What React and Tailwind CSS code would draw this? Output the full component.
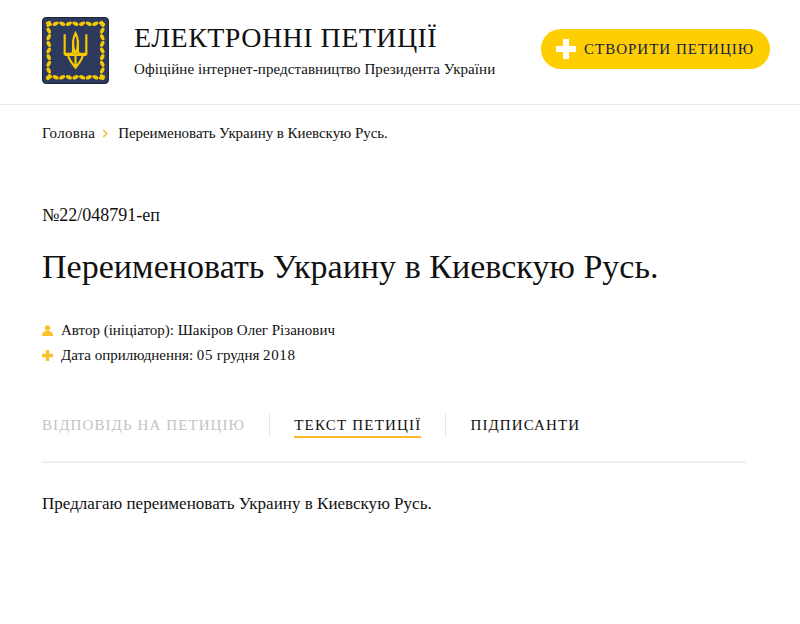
const serif = { fontFamily: '"Liberation Serif", serif' };

const braid = [];
for (let i = 0; i < 9; i++) {
  const p = 2 + i * 6.75;
  braid.push([p, 1.8, i % 2 ? -25 : 25], [p, 56.2, i % 2 ? 25 : -25], [1.8, p, i % 2 ? 65 : 115], [56.2, p, i % 2 ? 115 : 65]);
}

function Logo() {
  return (
    <div className="w-[67px] h-[67px] rounded-[4px] bg-[#2d3a5e] border border-[#1d2536] flex items-center justify-center shrink-0">
      <svg viewBox="-2 -2 62 62" className="w-[61px] h-[61px]">
        {braid.map(([x, y, r], i) => (
          <ellipse key={i} cx={x} cy={y} rx="3.300" ry="1.900" fill="#f5c800" transform={`rotate(${r} ${x} ${y})`} />
        ))}
        <g transform="translate(16.500 10.500)" fill="none" stroke="#f5c800" strokeWidth="2.200">
          <path d="M1.500 2v20h6c1.500 0 2.500-1 2.500-3V8" />
          <path d="M23.500 2v20h-6c-1.500 0-2.500-1-2.500-3V8" />
          <path d="M12.500 1c-2 4-3 8-2.200 13 .4 3 1.200 6 2.200 8 1-2 1.800-5 2.200-8 .8-5-.2-9-2.200-13z" />
          <path d="M1.500 23h22M5 23c.5 5 4 8 7.500 13 3.500-5 7-8 7.500-13M12.500 23v13" />
        </g>
      </svg>
    </div>
  );
}

function Plus({ className }) {
  return (
    <svg viewBox="0 0 20 20" className={className} fill="currentColor">
      <path d="M7 0h6v7h7v6h-7v7H7v-7H0V7h7z" />
    </svg>
  );
}

export default function App() {
  return (
    <div className="bg-white h-[624px] overflow-hidden text-[#111]" style={serif}>
      <header className="h-[105px] border-b border-[#e9e9e9] pl-[42px] pr-[30px] flex items-center">
        <div className="-mt-[3px]"><Logo /></div>
        <div className="ml-[25px] flex-1 -mt-[5px]">
          <div className="text-[28px] leading-[34px] tracking-[0.45px]">ЕЛЕКТРОННІ ПЕТИЦІЇ</div>
          <div className="text-[15px] leading-[18px] mt-[5px] tracking-[0.07px] whitespace-nowrap">Офіційне інтернет-представництво Президента України</div>
        </div>
        <div className="w-[229px] h-[40px] rounded-full bg-[#ffce00] flex items-center pl-[15px] -mt-[6px] text-[#10204a]">
          <Plus className="w-[20px] h-[20px] text-white" />
          <span className="ml-[8px] text-[15px] tracking-[1px] whitespace-nowrap">СТВОРИТИ ПЕТИЦІЮ</span>
        </div>
      </header>

      <main className="pl-[42px] pr-[54px]">
        <nav className="flex items-center h-[20px] mt-[18px] text-[15px]">
          <span className="tracking-[0.25px]">Головна</span>
          <svg viewBox="0 0 8 10" className="w-[7px] h-[9px] ml-[7px] mr-[9px]" fill="none" stroke="#fbb829" strokeWidth="1.600"><path d="M1.500 1l4 4-4 4" /></svg>
          <span className="tracking-[-0.05px]">Переименовать Украину в Киевскую Русь.</span>
        </nav>

        <div className="mt-[62px] text-[18px] leading-[20px]">№22/048791-еп</div>
        <h1 className="mt-[21px] text-[34px] leading-[42px] font-normal tracking-[0.03px]">Переименовать Украину в Киевскую Русь.</h1>

        <div className="mt-[30px] text-[15px] flex flex-col">
          <div className="flex items-center h-[25px]">
            <svg viewBox="0 0 12 12" className="w-[11px] h-[11px]" fill="#fbc02d"><circle cx="6" cy="3.200" r="3" /><path d="M0 12c0-4 2-5.500 6-5.500s6 1.500 6 5.500z" /></svg>
            <span className="ml-[8px]">Автор (ініціатор): Шакіров Олег Різанович</span>
          </div>
          <div className="flex items-center h-[24px]">
            <Plus className="w-[11px] h-[11px] text-[#fbc02d]" />
            <span className="ml-[8px]">Дата оприлюднення: <span className="tracking-[0.6px]">05</span> грудня <span className="tracking-[0.6px]">2018</span></span>
          </div>
        </div>

        <div className="mt-[47px] flex items-center h-[22px] text-[15px] tracking-[1.1px]">
          <span className="text-[#c4c4c4] pr-[24px] border-r border-[#e5e5e5] leading-[22px]">ВІДПОВІДЬ НА ПЕТИЦІЮ</span>
          <div className="mx-[24px]"><span className="block border-b-2 border-[#fbb829] leading-[22px] mt-[2px] tracking-[1.2px]">ТЕКСТ ПЕТИЦІЇ</span></div>
          <span className="border-l border-[#e5e5e5] pl-[24px] leading-[22px]">ПІДПИСАНТИ</span>
        </div>
        <div className="mt-[25px] border-t-2 border-[#f0f0f0]"></div>

        <p className="mt-[30px] text-[17px] leading-[22px] tracking-[0.02px]">Предлагаю переименовать Украину в Киевскую Русь.</p>
      </main>
    </div>
  );
}
